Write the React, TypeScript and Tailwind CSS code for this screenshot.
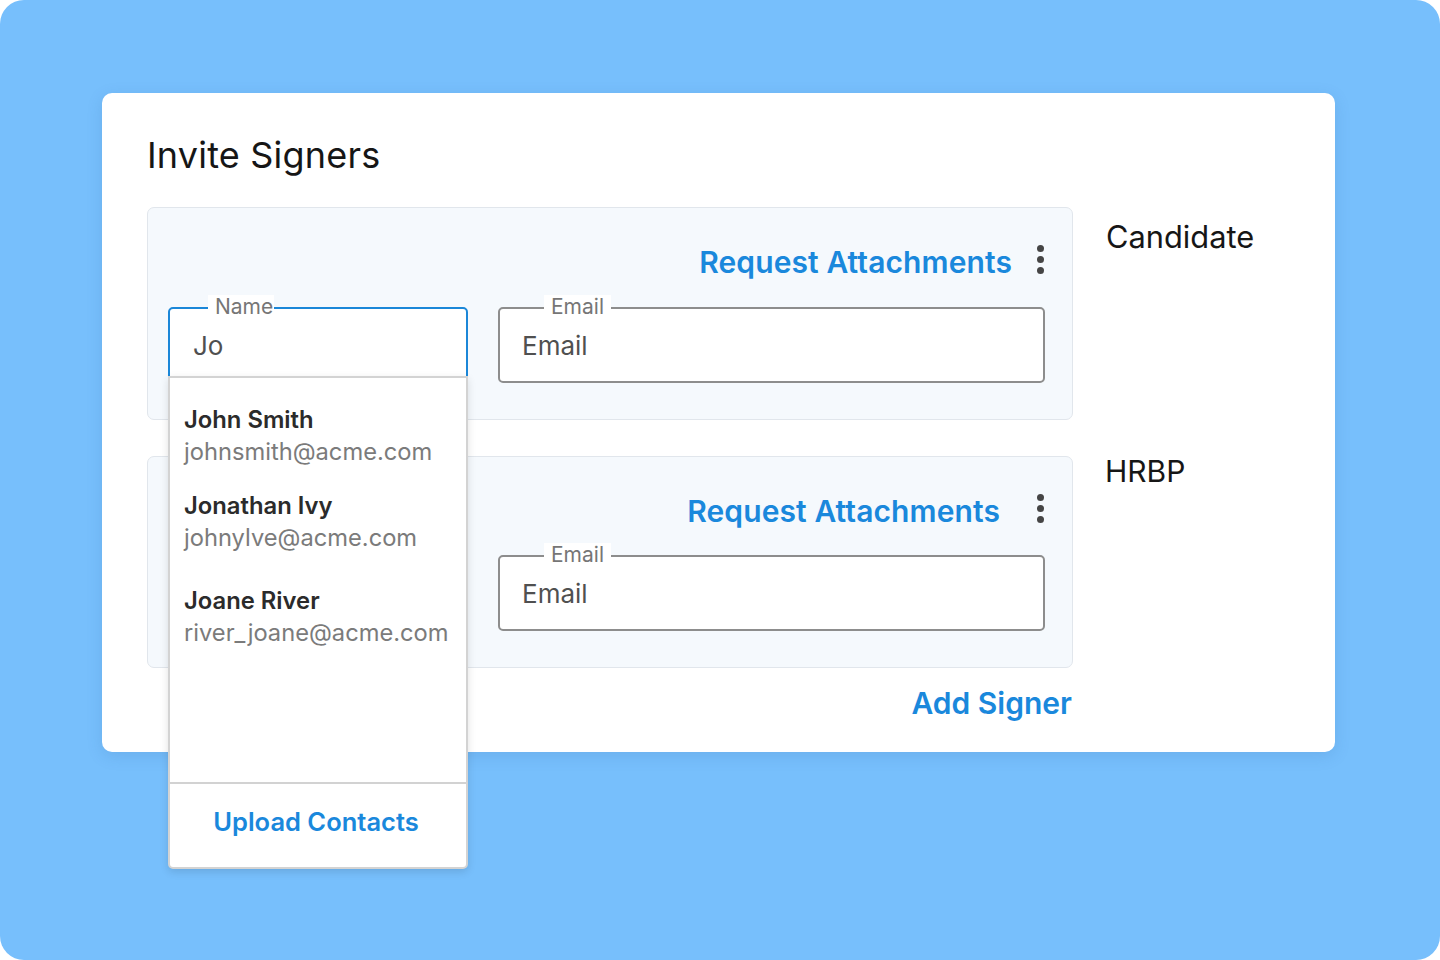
const contacts = [
  { name: "John Smith", email: "johnsmith@acme.com" },
  { name: "Jonathan Ivy", email: "johnylve@acme.com" },
  { name: "Joane River", email: "river_joane@acme.com" },
];

const Kebab = () => (
  <div className="flex flex-col items-center gap-[4px] w-[8px]">
    <span className="w-[7px] h-[7px] rounded-full bg-[#454545]" />
    <span className="w-[7px] h-[7px] rounded-full bg-[#454545]" />
    <span className="w-[7px] h-[7px] rounded-full bg-[#454545]" />
  </div>
);

// outlined text field with the label sitting on the top border
const Field = ({
  label,
  value,
  focused,
  className,
  labelClass,
}: {
  label: string;
  value: string;
  focused?: boolean;
  className?: string;
  labelClass: string;
}) => (
  <div
    className={`relative h-[76px] bg-white rounded-[5px] flex items-center ${
      focused ? "border-2 border-[#1b87d8] pl-[23px]" : "border-2 border-[#8d8d8d] pl-[22px]"
    } ${className ?? ""}`}
  >
    <span className={`absolute -top-[14px] text-[21px] leading-[24px] text-[#767676] bg-white ${labelClass}`}>
      {label}
    </span>
    <span className="text-[26px] text-[#505050]">{value}</span>
  </div>
);

export default function App() {
  return (
    <div className="w-[1440px] h-[960px] bg-white" style={{ fontFamily: "Inter, 'Noto Sans', sans-serif" }}>
      <div className="w-full h-full rounded-[24px] bg-[#77bffc] pt-[93px] pl-[102px] relative">
        {/* main card */}
        <div className="w-[1233px] h-[659px] bg-white rounded-[10px] shadow-[0_4px_16px_rgba(40,90,150,0.15)] pt-[32px] pl-[45px]">
          <h1 className="text-[36px] leading-[60px] text-[#161616] tracking-[0.2px]">Invite Signers</h1>

          <div className="flex mt-[22px]">
            <div className="w-[926px] flex flex-col">
              {/* candidate */}
              <div className="h-[213px] bg-[#f5f9fd] border border-[#e1e6ec] rounded-[7px] pt-[36px] pl-[20px] pr-[27px]">
                <div className="flex items-center justify-end h-[36px]">
                  <span className="text-[30px] font-semibold text-[#1a88dc] tracking-[0.1px]">Request Attachments</span>
                  <div className="ml-[24px] mr-[1px] -mt-[5px]">
                    <Kebab />
                  </div>
                </div>
                <div className="flex gap-[30px] mt-[27px]">
                  <Field label="Name" value="Jo" focused className="w-[300px]" labelClass="left-[38px] pl-[7px] pr-[1px]" />
                  <Field label="Email" value="Email" className="w-[547px]" labelClass="left-[44px] px-[7px]" />
                </div>
              </div>

              {/* HRBP */}
              <div className="h-[212px] mt-[36px] bg-[#f5f9fd] border border-[#e1e6ec] rounded-[7px] pt-[36px] pl-[350px] pr-[27px]">
                <div className="flex items-center justify-end h-[36px]">
                  <span className="text-[30px] font-semibold text-[#1a88dc] tracking-[0.1px]">Request Attachments</span>
                  <div className="ml-[36px] mr-[1px] -mt-[6px]">
                    <Kebab />
                  </div>
                </div>
                <div className="mt-[26px]">
                  <Field label="Email" value="Email" className="w-[547px]" labelClass="left-[44px] px-[7px]" />
                </div>
              </div>

              <div className="flex justify-end mt-[15px] mr-[1px]">
                <span className="text-[30px] font-semibold text-[#1a88dc] leading-[40px]">Add Signer</span>
              </div>
            </div>

            <div className="flex flex-col ml-[34px]">
              <span className="text-[30.8px] text-[#161616] mt-[8px] leading-[44px] -ml-[1px]">Candidate</span>
              <span className="text-[30px] text-[#161616] mt-[190px] leading-[44px] -ml-[2px]">HRBP</span>
            </div>
          </div>
        </div>

        {/* autocomplete menu */}
        <div className="absolute left-[168px] top-[376px] w-[300px] h-[493px] bg-white border-2 border-[#d3d3d3] rounded-b-[5px] shadow-[0_3px_8px_rgba(0,0,0,0.12)] flex flex-col">
          <div className="flex-1 pl-[14px] pt-[26px]">
            {contacts.map((c, i) => (
              <div key={c.email} className={i === 0 ? "" : i === 1 ? "mt-[22px]" : "mt-[31px]"}>
                <div className="text-[23.8px] leading-[32px] font-semibold text-[#2b2b2b]">{c.name}</div>
                <div className="text-[23.7px] leading-[32px] text-[#7b7b7b]">{c.email}</div>
              </div>
            ))}
          </div>
          <div className="h-[85px] border-t-2 border-[#d2d2d2] flex items-center justify-center pb-[6px] pr-[4px]">
            <span className="text-[25.5px] font-semibold text-[#1a88dc]">Upload Contacts</span>
          </div>
        </div>
      </div>
    </div>
  );
}
